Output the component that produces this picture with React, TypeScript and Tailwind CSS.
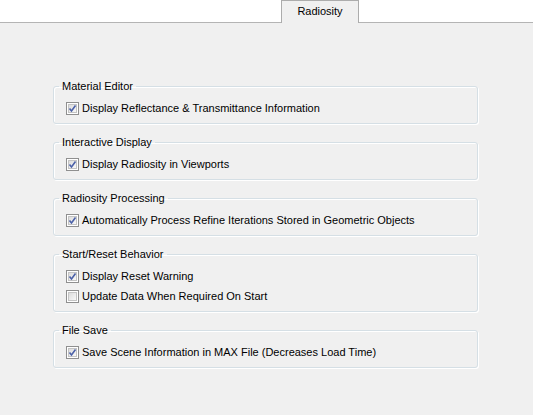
import React from 'react'

type Item = { label: string; checked: boolean }
type Group = { title: string; items: Item[] }

const groups: Group[] = [
  { title: 'Material Editor', items: [{ label: 'Display Reflectance & Transmittance Information', checked: true }] },
  { title: 'Interactive Display', items: [{ label: 'Display Radiosity in Viewports', checked: true }] },
  {
    title: 'Radiosity Processing',
    items: [{ label: 'Automatically Process Refine Iterations Stored in Geometric Objects', checked: true }],
  },
  {
    title: 'Start/Reset Behavior',
    items: [
      { label: 'Display Reset Warning', checked: true },
      { label: 'Update Data When Required On Start', checked: false },
    ],
  },
  { title: 'File Save', items: [{ label: 'Save Scene Information in MAX File (Decreases Load Time)', checked: true }] },
]

const CheckBox = ({ checked }: { checked: boolean }) => (
  <span className="w-[13px] h-[13px] border border-[#8f8f8f] bg-white p-px flex shrink-0">
    <span className="flex-1 border border-[#c4c4c4] bg-gradient-to-br from-[#dcdcdc] to-[#f8f8f8] flex items-center justify-center">
      {checked && (
        <svg width="9" height="9" viewBox="0 0 9 9" className="-m-px">
          <path d="M1.5 4.5 L3.5 7 L7.5 1.5" fill="none" stroke="#4b61a8" strokeWidth="1.6" />
        </svg>
      )}
    </span>
  </span>
)

const App = () => {
  return (
    <div className="w-[533px] h-[415px] bg-[#f0f0f0] text-[11px] text-black font-['Liberation_Sans',Arial,sans-serif] flex flex-col">
      <div className="h-[23px] bg-white border-b border-[#b4b4b4] flex items-end shrink-0">
        <div className="ml-[281px] w-[78px] h-[23px] -mb-px border border-b-0 border-[#acacac] bg-[#f0f0f0] flex items-center justify-center pb-[2px]">
          Radiosity
        </div>
      </div>

      <div className="pl-[53px] pr-[55px] pt-[56px] flex flex-col gap-[11px]">
        {groups.map((g) => (
          <fieldset
            key={g.title}
            className="border border-[#d5dfe5] rounded-[3px] shadow-[1px_1px_0_#fff,inset_1px_1px_0_#fff] pb-[5px] pt-[5px]"
          >
            <legend className="ml-[5px] px-[3px] leading-[14px]">{g.title}</legend>
            <div className="pl-[12px] flex flex-col">
              {g.items.map((it) => (
                <label key={it.label} className="h-[20px] flex items-center gap-[3px]">
                  <CheckBox checked={it.checked} />
                  <span>{it.label}</span>
                </label>
              ))}
            </div>
          </fieldset>
        ))}
      </div>
    </div>
  )
}

export default App
